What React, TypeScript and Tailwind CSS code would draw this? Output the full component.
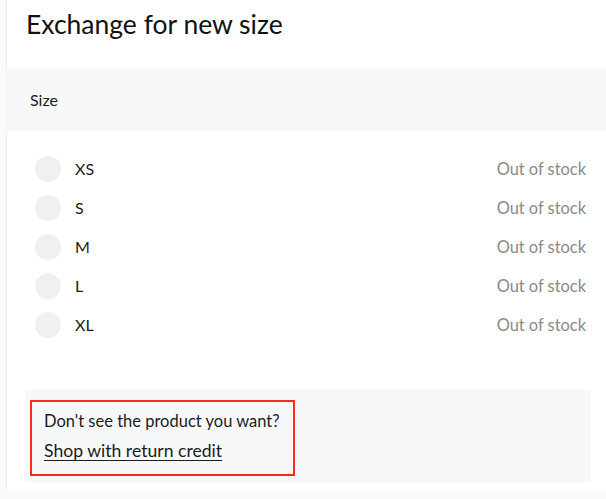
const SIZES = ['XS', 'S', 'M', 'L', 'XL'];

export default function App() {
  return (
    <div className="h-[499px] overflow-hidden bg-[#fafafa] pl-[6px] font-['Lato','Liberation_Sans',sans-serif] text-[#1c1c1c]">
      <div className="h-[490px] border-l border-[#efefef] bg-white">
        <h1 className="pl-[19px] pt-[8px] text-[26.5px] leading-[32px] font-normal text-[#111]">
          Exchange for new size
        </h1>

        <div className="mt-[29px] flex h-[61px] items-center bg-[#f7f8fa] pl-[23px] text-[16px] leading-[24px]">
          Size
        </div>

        <ul className="mt-[19px]">
          {SIZES.map((size) => (
            <li key={size} className="flex h-[39px] items-center pl-[28px] pr-[20px] text-[16px] leading-[24px]">
              <span className="h-[26px] w-[26px] rounded-full bg-[#f0f0f0]" />
              <span className="ml-[14px] flex-1">{size}</span>
              <span className="text-[16.4px] text-[#8a8a8a]">Out of stock</span>
            </li>
          ))}
        </ul>

        <div className="ml-[18px] mr-[15px] mt-[46px] bg-[#f7f8fa] pb-[6px] pl-[5px] pt-[10px]">
          <div className="inline-flex flex-col gap-[6px] border-2 border-[#ff2a1a] pb-[11px] pl-[12px] pr-[13px] pt-[7px] leading-[24px]">
            <p className="text-[16.5px]">Don't see the product you want?</p>
            <a href="#" className="self-start text-[17.6px] underline underline-offset-[3px]">
              Shop with return credit
            </a>
          </div>
        </div>
      </div>
    </div>
  );
}
